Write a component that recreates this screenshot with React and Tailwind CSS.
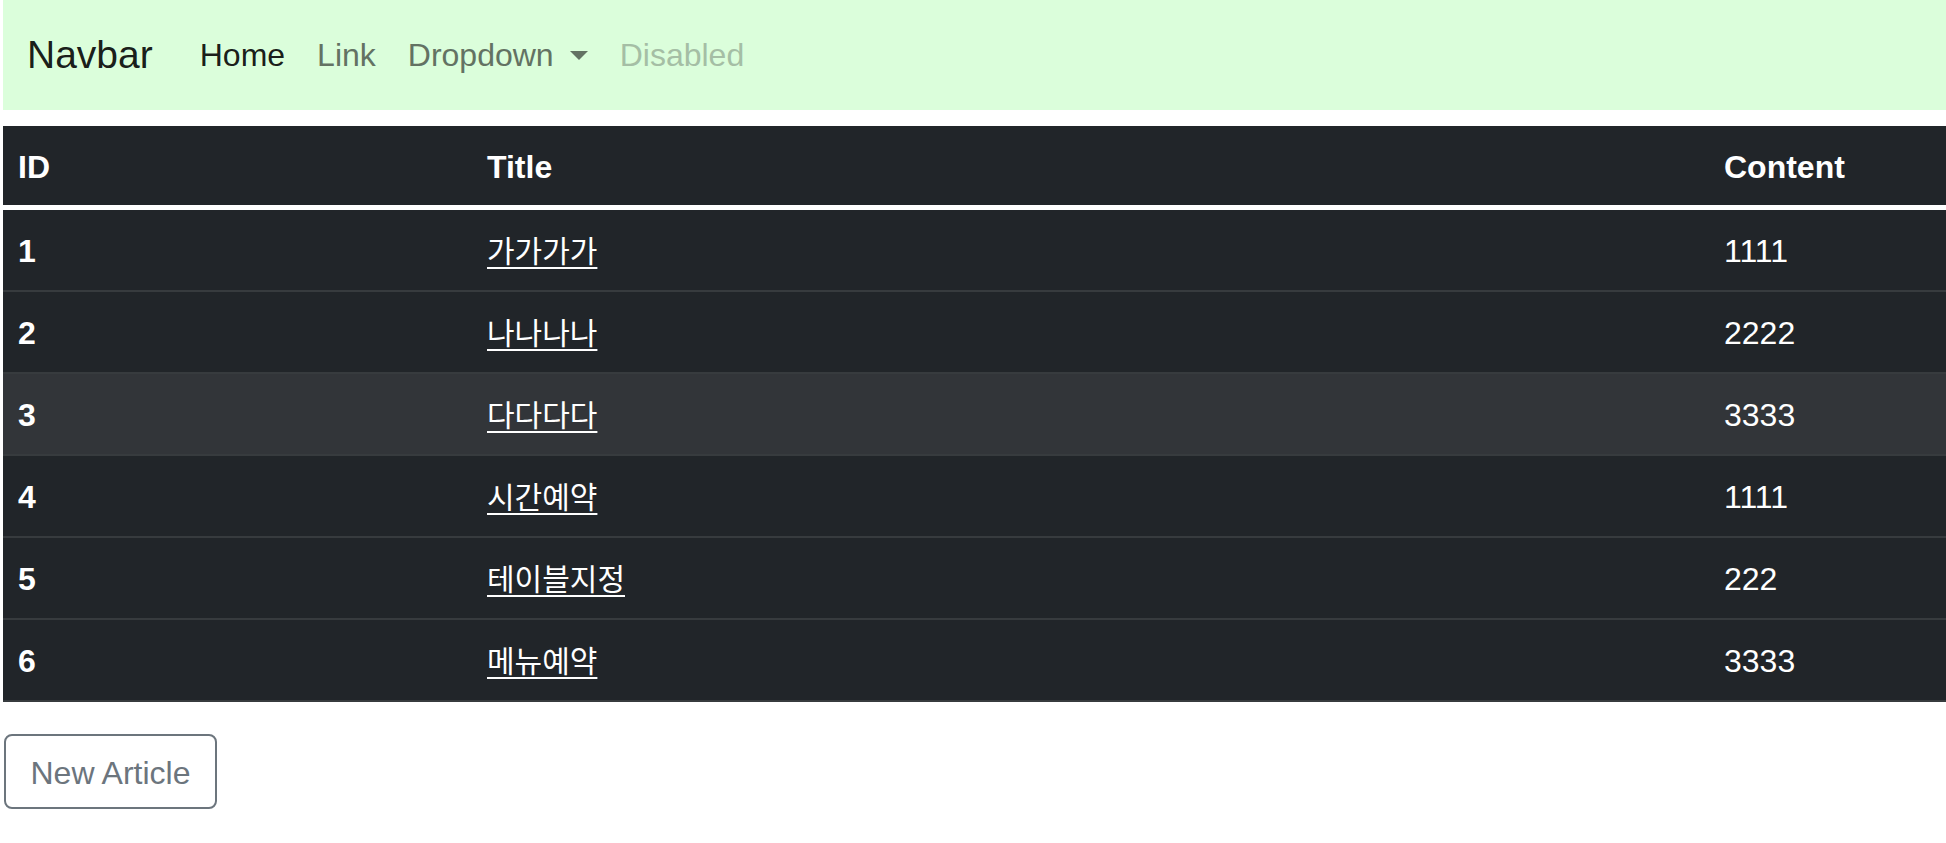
import React from "react";

const rows = [
  { id: 1, title: "가가가가", content: "1111" },
  { id: 2, title: "나나나나", content: "2222" },
  { id: 3, title: "다다다다", content: "3333", hover: true },
  { id: 4, title: "시간예약", content: "1111" },
  { id: 5, title: "테이블지정", content: "222" },
  { id: 6, title: "메뉴예약", content: "3333" },
];

export default function App() {
  return (
    <div className="min-h-screen bg-white pl-[3px] font-['Liberation_Sans','Noto_Sans_CJK_KR',sans-serif]">
      <nav className="flex h-[110px] items-center bg-[#dbfedb] pl-[24px]">
        <a href="#" className="mr-[31px] text-[39px] leading-[58px] text-black/90">
          Navbar
        </a>
        <ul className="flex items-center text-[32px] leading-[47px]">
          <li>
            <a href="#" className="block px-[16px] text-black/90">
              Home
            </a>
          </li>
          <li>
            <a href="#" className="block px-[16px] text-[#637263]">
              Link
            </a>
          </li>
          <li>
            <a href="#" className="flex items-center px-[16px] text-[#637263]">
              Dropdown
              <span className="ml-[16px] inline-block h-0 w-0 border-x-[9px] border-t-[9px] border-x-transparent border-t-[#637263]"></span>
            </a>
          </li>
          <li>
            <span className="block px-[16px] text-[#a5bea5]">Disabled</span>
          </li>
        </ul>
      </nav>

      <div className="mt-[16px] bg-[#212529] text-[32px] leading-[47px] text-white">
        <div className="grid h-[84px] grid-cols-[469px_1237px_1fr] items-center border-b-[5px] border-white pt-[3px] font-bold">
          <div className="pl-[15px]">ID</div>
          <div className="pl-[15px]">Title</div>
          <div className="pl-[15px]">Content</div>
        </div>
        {rows.map((r) => (
          <div
            key={r.id}
            className={`grid h-[82px] grid-cols-[469px_1237px_1fr] items-center border-b-2 border-[#373b3e] pt-[2px] ${
              r.hover ? "bg-[#323539]" : "bg-[#212529]"
            }`}
          >
            <div className="pl-[15px] font-bold">{r.id}</div>
            <div className="pl-[15px]">
              <a href="#" className="text-[30px] text-white underline decoration-2 underline-offset-[5px]">
                {r.title}
              </a>
            </div>
            <div className="pl-[15px] no-underline">{r.content}</div>
          </div>
        ))}
      </div>

      <button className="mt-[32px] ml-[1px] h-[75px] w-[213px] rounded-[8px] border-2 border-[#6c757d] bg-white pt-[3px] text-[32px] text-[#6c757d]">
        New Article
      </button>
    </div>
  );
}
